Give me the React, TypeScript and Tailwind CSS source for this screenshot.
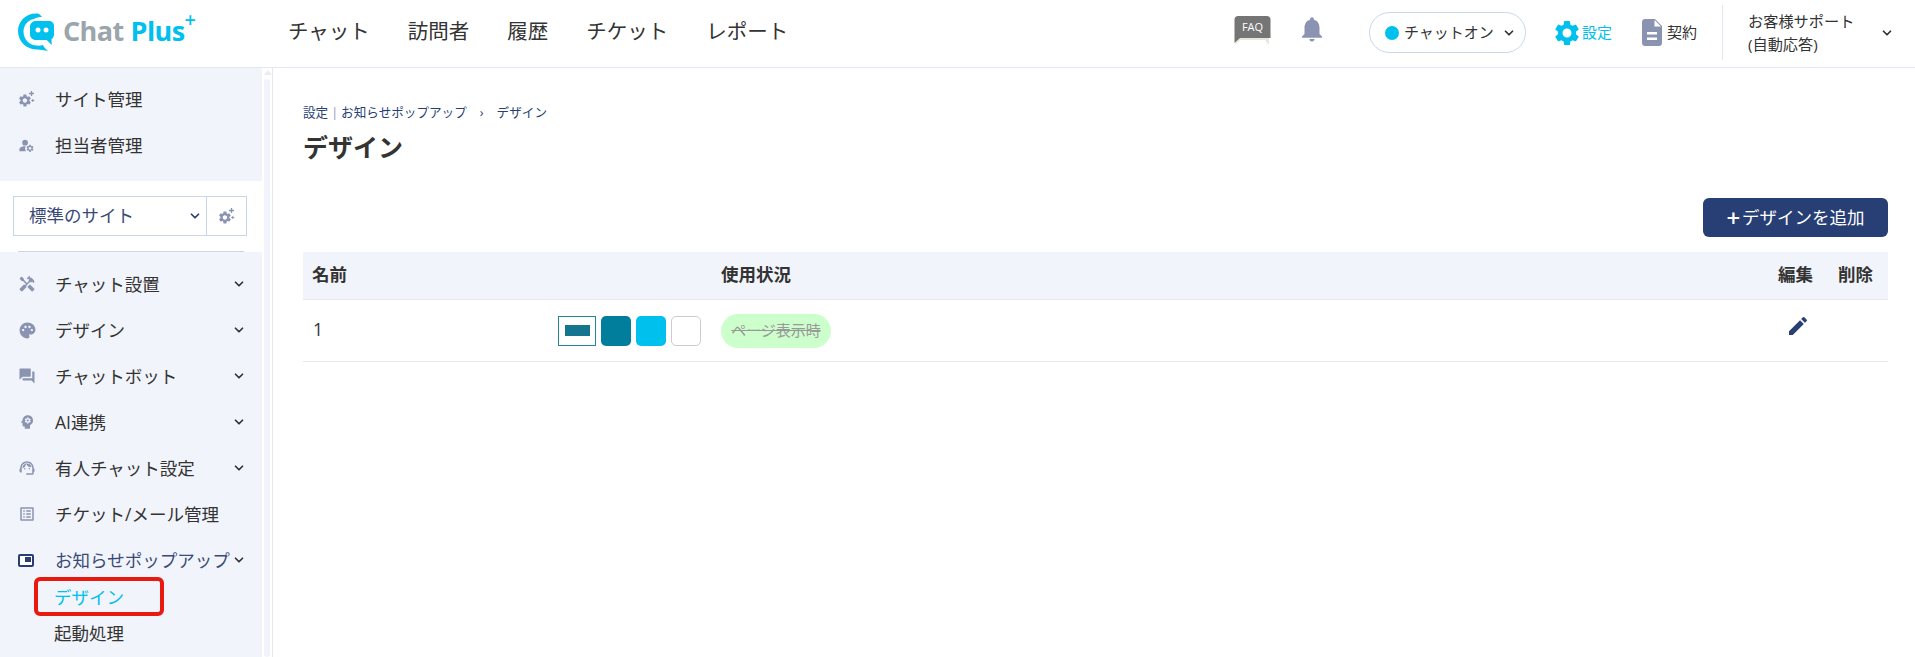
import { ChevronDown } from 'lucide-react';
import {
  MdEdit,
  MdForum,
  MdHandyman,
  MdManageAccounts,
  MdNotifications,
  MdOutlineListAlt,
  MdPalette,
  MdPsychology,
  MdSettings,
  MdSupportAgent,
} from 'react-icons/md';

function Chevron({ className = 'text-[#333]' }: { className?: string }) {
  return <ChevronDown size={14} strokeWidth={3} className={className} />;
}

function Logo() {
  return (
    <div className="flex items-center pb-[4px]">
      <svg width="38" height="40" viewBox="0 0 38 40" className="ml-[17px] mt-[2px]">
        <path d="M21 1.5C10 .5 1 8.5 1 19c0 10.500 8.500 18.500 19 18.500 4 0 7 .8 11 1.500-2.500-2-4-3.700-5-6-1.500.5-3.500.7-6 .6-7.500 0-13.500-6-13.500-14.100C6.500 13 11 8 17 7c2-1.500 5-2 8-2-1-1.500-2.500-3-4-3.500z" fill="#00c0ed" />
        <path d="M19 9h13c3 0 5 2 5 5v8c0 2.500-.8 4-2.500 5l.2 6-5-5H19c-3.500 0-6-2.500-6-6v-7c0-3.500 2.500-6 6-6z" fill="#00c0ed" />
        <circle cx="21" cy="18" r="2.500" fill="#fff" />
        <circle cx="29" cy="18" r="2.500" fill="#fff" />
      </svg>
      <span className="ml-[8px] text-[27px] font-bold tracking-[-0.6px] text-[#9aa5ac] leading-none">Chat</span>
      <span className="ml-[7px] text-[27px] font-bold tracking-[-0.6px] text-[#00c0ed] leading-none">Plus</span>
      <span className="relative -top-[11px] text-[20px] font-semibold text-[#00c0ed] leading-none">+</span>
    </div>
  );
}

function FaqIcon() {
  return (
    <svg width="37" height="30" viewBox="0 0 37 30">
      <path d="M2 22h33v7l-4-5H6l-5 5z" fill="#e7e7df" />
      <path d="M4 0h29c2 0 3.500 1.500 3.500 3.500V22H6L.5 27V3.500C.5 1.500 2 0 4 0z" fill="#757575" />
      <text x="18.500" y="15" textAnchor="middle" fontSize="11" fill="#fff">FAQ</text>
    </svg>
  );
}

function DocIcon() {
  return (
    <svg width="20" height="27" viewBox="0 0 20 27">
      <path d="M3 0h10l7 7v17c0 1.700-1.300 3-3 3H3c-1.700 0-3-1.300-3-3V3c0-1.700 1.300-3 3-3z" fill="#8a94b2" />
      <path d="M12.500 1v6.500H19z" fill="#fff" />
      <rect x="5" y="13" width="10" height="2.500" fill="#fff" />
      <rect x="5" y="18.500" width="10" height="2.500" fill="#fff" />
    </svg>
  );
}

function GearPlus() {
  return (
    <svg width="17" height="17" viewBox="0 0 17 17">
      <g transform="translate(-0.5 2) scale(0.62)">
        <path
          fill="#8a94b2"
          d="M19.140 12.940c.04-.3.060-.61.060-.94 0-.32-.02-.64-.07-.94l2.030-1.580c.18-.14.230-.41.120-.61l-1.920-3.320c-.12-.22-.37-.29-.59-.22l-2.390.96c-.5-.38-1.030-.7-1.620-.94l-.36-2.540c-.04-.24-.24-.41-.48-.41h-3.840c-.24 0-.43.170-.47.410l-.36 2.540c-.59.240-1.130.57-1.620.94l-2.390-.96c-.22-.08-.47 0-.59.220L2.740 8.870c-.12.210-.08.470.12.610l2.030 1.580c-.05.3-.09.630-.09.940s.02.640.07.940l-2.030 1.580c-.18.140-.23.410-.12.610l1.920 3.320c.12.220.37.290.59.220l2.390-.96c.5.380 1.030.7 1.620.94l.36 2.540c.05.240.24.410.48.410h3.840c.24 0 .44-.17.470-.41l.36-2.540c.59-.24 1.130-.56 1.620-.94l2.390.96c.22.080.47 0 .59-.22l1.920-3.320c.12-.22.070-.47-.12-.61l-2.010-1.580zM12 15.600c-1.980 0-3.600-1.620-3.600-3.600s1.620-3.600 3.600-3.600 3.600 1.620 3.600 3.600-1.620 3.600-3.600 3.600z"
        />
      </g>
      <path d="M13.500 0v5M11 2.500h5" stroke="#8a94b2" strokeWidth="1.300" />
      <path d="M14.800 8v3M13.300 9.500h3" stroke="#8a94b2" strokeWidth="1" />
    </svg>
  );
}

function PopupIcon() {
  return (
    <span className="flex h-[13px] w-[16px] items-start justify-end rounded-[2px] border-2 border-[#273f75] bg-white pt-[1px] pr-[1px]">
      <span className="h-[5px] w-[6px] bg-[#273f75]" />
    </span>
  );
}

function SideRow({ icon, label, arrow, navy }: { icon: React.ReactNode; label: string; arrow?: boolean; navy?: boolean }) {
  return (
    <div className={`flex h-[46px] items-center pl-[18px] pr-[16px] text-[17.5px] ${navy ? 'text-[#3a4a78]' : 'text-[#333]'}`}>
      <span className="flex w-[37px] shrink-0 items-center">{icon}</span>
      <span className="whitespace-nowrap">{label}</span>
      {arrow && (
        <span className="ml-auto">
          <Chevron />
        </span>
      )}
    </div>
  );
}

const iconClass = 'text-[#8a94b2]';

function Sidebar() {
  return (
    <aside className="flex w-[273px] shrink-0 border-r border-[#e4e7f0]">
      <div className="w-[262px] shrink-0">
        <div className="bg-[#f1f4fa] pt-[8px] pb-[13px]">
          <SideRow icon={<GearPlus />} label="サイト管理" />
          <SideRow icon={<MdManageAccounts size={17} className={iconClass} />} label="担当者管理" />
        </div>
        <div className="h-[70px] px-[13px] pt-[15px]">
          <div className="flex h-[40px] w-[234px] border border-[#c9d6ea] text-[17.5px] text-[#3a4a78]">
            <div className="flex flex-1 items-center pl-[15px] pr-[4px]">
              <span className="-mt-[2px]">標準のサイト</span>
              <span className="ml-auto">
                <Chevron className="text-[#273f75]" />
              </span>
            </div>
            <div className="flex w-[40px] items-center justify-center border-l border-[#c9d6ea]">
              <GearPlus />
            </div>
          </div>
        </div>
        <div className="mx-[18px] h-px bg-[#ccd4e2]" />
        <div className="h-[406px] bg-[#f1f4fa] pt-[9px]">
          <SideRow icon={<MdHandyman size={18} className={iconClass} />} label="チャット設置" arrow />
          <SideRow icon={<MdPalette size={19} className={iconClass} />} label="デザイン" arrow />
          <SideRow icon={<MdForum size={18} className={iconClass} />} label="チャットボット" arrow />
          <SideRow icon={<MdPsychology size={18} className={iconClass} />} label="AI連携" arrow />
          <SideRow icon={<MdSupportAgent size={18} className={iconClass} />} label="有人チャット設定" arrow />
          <SideRow icon={<MdOutlineListAlt size={18} className={iconClass} />} label="チケット/メール管理" />
          <SideRow icon={<PopupIcon />} label="お知らせポップアップ" arrow navy />
          <div className="-mt-[4px] pl-[54px] text-[17.5px]">
            <div className="relative flex h-[36px] items-center text-[#00c0ed]">
              デザイン
              <span className="absolute -left-[20px] -top-[2px] h-[39px] w-[130px] rounded-[6px] border-[4px] border-[#e8190e]" />
            </div>
            <div className="flex h-[36px] items-center text-[#333]">起動処理</div>
          </div>
        </div>
      </div>
      <div className="flex-1 pt-[2px] pl-[2px]">
        <div className="mx-auto h-0 w-0 border-x-[4px] border-b-[5px] border-x-transparent border-b-[#e9edf3]" />
        <div className="mt-[4px] h-[578px] w-[6px] rounded-[3px] bg-[#f1f4fa]" />
      </div>
    </aside>
  );
}

export default function App() {
  return (
    <div className="h-[657px] w-[1915px] overflow-hidden bg-white font-['Open_Sans','Noto_Sans_CJK_JP',sans-serif]">
      <header className="flex h-[68px] items-center border-b border-[#e4e7f0] pr-[21px] pb-[2px]">
        <div className="w-[288px] shrink-0">
          <Logo />
        </div>
        <nav className="flex items-center gap-[38px] pb-[2px] text-[20.5px] text-[#333]">
          <span>チャット</span>
          <span>訪問者</span>
          <span>履歴</span>
          <span>チケット</span>
          <span>レポート</span>
        </nav>
        <div className="ml-auto flex h-full items-center">
          <span className="-mt-[4px]">
            <FaqIcon />
          </span>
          <MdNotifications size={30} className="ml-[26px] -mt-[8px] text-[#8a94b2]" />
          <div className="ml-[42px] flex h-[41px] w-[157px] items-center rounded-full border border-[#c9d6ea] pl-[15px] text-[15px] text-[#333]">
            <span className="h-[14px] w-[14px] rounded-full bg-[#00c0ed]" />
            <span className="ml-[5px]">チャットオン</span>
            <span className="ml-[8px]">
              <Chevron />
            </span>
          </div>
          <MdSettings size={30} className="ml-[26px] text-[#00c0ed]" />
          <span className="text-[15px] text-[#00c0ed]">設定</span>
          <span className="ml-[30px]">
            <DocIcon />
          </span>
          <span className="ml-[5px] text-[15px] text-[#333]">契約</span>
          <div className="ml-[25px] flex h-[55px] items-center border-l border-[#e4e7f0] pl-[25px] text-[15.2px] leading-[23px] text-[#333]">
            <div className="w-[132px]">
              お客様サポート
              <br />
              (自動応答)
            </div>
            <Chevron />
          </div>
        </div>
      </header>
      <div className="flex h-[589px]">
        <Sidebar />
        <main className="flex-1 pl-[30px] pr-[27px]">
          <div className="mt-[35px] flex h-[20px] items-center text-[12.6px] text-[#273f75]">
            <span>設定</span>
            <span className="mx-[3px] text-[#8a94b2]">|</span>
            <span>お知らせポップアップ</span>
            <span className="mx-[13px]">›</span>
            <span>デザイン</span>
          </div>
          <h1 className="mt-[7px] text-[25px] font-bold leading-[34px] text-[#333]">デザイン</h1>
          <div className="mt-[34px] flex justify-end">
            <button className="flex h-[39px] w-[185px] items-center justify-center rounded-[6px] bg-[#273f75] text-[17.5px] text-white">
              <span className="mr-[2px] text-[24px] font-semibold leading-none">+</span>デザインを追加
            </button>
          </div>
          <div className="mt-[15px] grid h-[48px] grid-cols-[255px_163px_1fr_60px_50px] items-center border-b border-[#e4e7f0] bg-[#f1f4fa] pb-[3px] text-[17.5px] font-bold text-[#333]">
            <span className="pl-[9px]">名前</span>
            <span />
            <span>使用状況</span>
            <span>編集</span>
            <span>削除</span>
          </div>
          <div className="grid h-[62px] grid-cols-[255px_163px_1fr_60px_50px] items-center border-b border-[#e4e7f0] text-[17.5px] text-[#333]">
            <span className="pl-[10px] -mt-[3px]">1</span>
            <div className="flex items-center">
              <span className="flex h-[30px] w-[38px] items-center justify-center border border-[#2a8296]">
                <span className="h-[11px] w-[25px] bg-[#15758f]" />
              </span>
              <span className="ml-[5px] h-[30px] w-[30px] rounded-[5px] bg-[#007e9b]" />
              <span className="ml-[5px] h-[30px] w-[30px] rounded-[5px] bg-[#00c0ed]" />
              <span className="ml-[5px] h-[30px] w-[30px] rounded-[5px] border border-[#cccccc]" />
            </div>
            <div>
              <span className="inline-flex h-[34px] w-[110px] items-center justify-center rounded-full bg-[#ccffcc] text-[15px] text-[#999] line-through">
                ページ表示時
              </span>
            </div>
            <span className="pl-[8px] -mt-[10px]">
              <MdEdit size={24} className="text-[#273f75]" />
            </span>
            <span />
          </div>
        </main>
      </div>
    </div>
  );
}
